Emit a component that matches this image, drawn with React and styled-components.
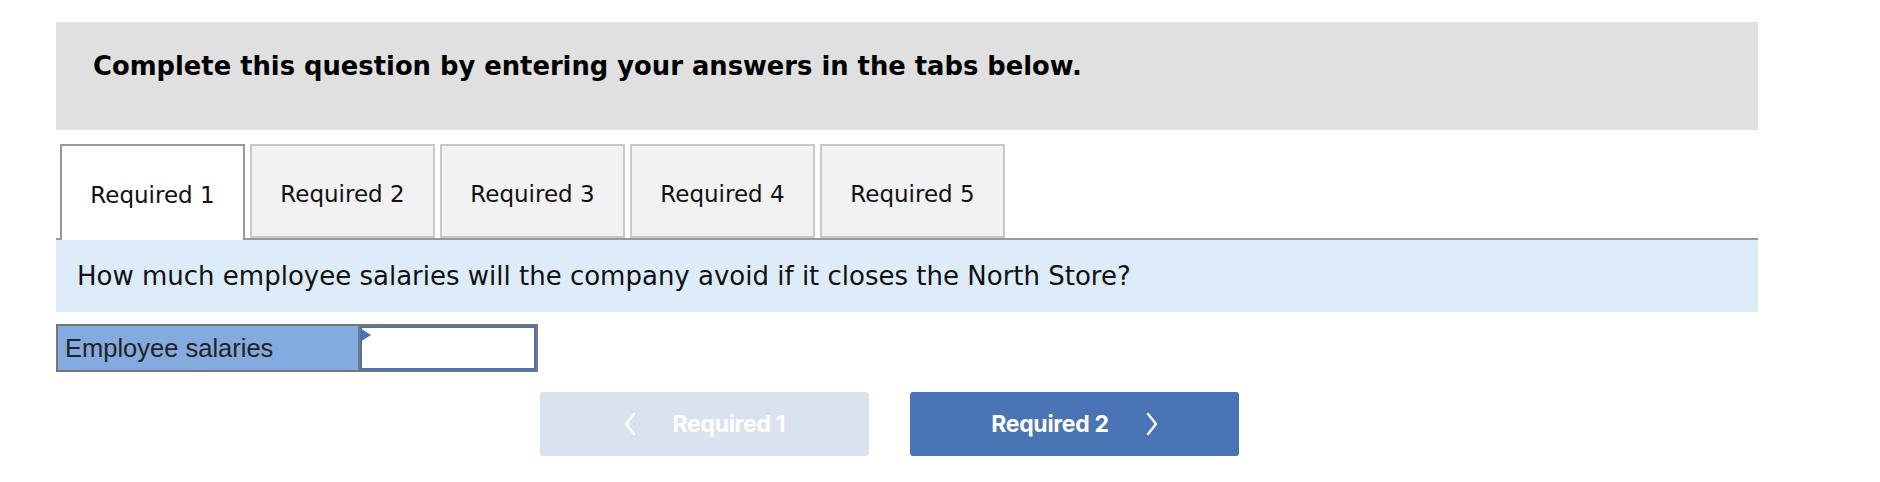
import React from 'react';
import styled, { createGlobalStyle } from 'styled-components';

const GlobalStyle = createGlobalStyle`
  body {
    margin: 0;
    background: #ffffff;
    font-family: "DejaVu Sans", Verdana, sans-serif;
  }
`;

const Page = styled.div`
  width: 1702px;
  padding: 22px 0 0 56px;
`;

const Instructions = styled.div`
  height: 108px;
  padding: 29px 0 0 37px;
  box-sizing: border-box;

  font-weight: 700;
  font-size: 25.8px;
  color: #000000;

  background: #e0e0e0;
`;

const TabBar = styled.div`
  display: flex;
  align-items: flex-end;
  gap: 5px;
  margin-top: 14px;
  padding-left: 4px;

  border-bottom: 2px solid #999999;
`;

const Tab = styled.button`
  display: flex;
  align-items: center;
  justify-content: center;
  box-sizing: border-box;
  width: 185px;
  height: ${(p) => (p.active ? '96px' : '94px')};
  margin-bottom: ${(p) => (p.active ? '-2px' : '0')};
  padding: 6px 0 ${(p) => (p.active ? '2px' : '0')};

  font-family: "DejaVu Sans", Verdana, sans-serif;
  font-size: 23px;
  color: #111111;

  background: ${(p) => (p.active ? '#ffffff' : '#f2f2f2')};
  border: 2px solid ${(p) => (p.active ? '#999999' : '#c8c8c8')};
  border-bottom: ${(p) => (p.active ? 'none' : '2px solid #c8c8c8')};
  cursor: pointer;
`;

const Question = styled.div`
  display: flex;
  align-items: center;
  height: 72px;
  padding-left: 21px;

  font-size: 26px;
  color: #111111;

  background: #deebf8;
`;

const AnswerRow = styled.div`
  display: flex;
  width: 482px;
  height: 48px;
  margin-top: 12px;
  box-sizing: border-box;

  border: 2px solid #777777;
`;

const Label = styled.div`
  display: flex;
  align-items: center;
  width: 302px;
  padding-left: 7px;
  box-sizing: border-box;

  font-family: "Liberation Sans", Arial, sans-serif;
  font-size: 25.5px;
  color: #222222;

  background: #84abdf;
  border-right: 2px solid #777777;
`;

const InputCell = styled.div`
  position: relative;
  flex: 1;
`;

const Marker = styled.div`
  position: absolute;
  top: 2px;
  left: 0;
  width: 0;
  height: 0;

  border-top: 7px solid transparent;
  border-bottom: 7px solid transparent;
  border-left: 11px solid #4a75b5;
`;

const Field = styled.input`
  display: block;
  width: 100%;
  height: 100%;
  box-sizing: border-box;

  font-size: 20px;

  border: 2px solid #4a73b2;
  outline: none;
`;

const Nav = styled.div`
  display: flex;
  gap: 41px;
  margin-top: 20px;
  padding-left: 484px;
`;

const NavButton = styled.button`
  display: flex;
  align-items: center;
  justify-content: center;
  gap: 37px;
  width: 329px;
  height: 64px;

  font-family: Inter, "Noto Sans", sans-serif;
  font-weight: 700;
  font-size: 23px;
  letter-spacing: -0.3px;
  color: #ffffff;

  background: ${(p) => (p.disabled ? '#d9e3ef' : '#4a75b4')};
  border: none;
  border-radius: 3px;
  cursor: ${(p) => (p.disabled ? 'default' : 'pointer')};
`;

const Chevron = ({ dir }) => (
  <svg width="12" height="22" viewBox="0 0 12 22" fill="none">
    <path
      d={dir === 'left' ? 'M10 1 L2 11 L10 21' : 'M2 1 L10 11 L2 21'}
      stroke="#ffffff"
      strokeWidth="2.4"
      strokeLinecap="round"
      strokeLinejoin="round"
    />
  </svg>
);

const tabs = ['Required 1', 'Required 2', 'Required 3', 'Required 4', 'Required 5'];

export default function App() {
  return (
    <>
      <GlobalStyle />
      <Page>
        <Instructions>
          Complete this question by entering your answers in the tabs below.
        </Instructions>

        <TabBar>
          {tabs.map((t, i) => (
            <Tab key={t} active={i === 0}>
              {t}
            </Tab>
          ))}
        </TabBar>

        <Question>
          How much employee salaries will the company avoid if it closes the North Store?
        </Question>

        <AnswerRow>
          <Label>Employee salaries</Label>
          <InputCell>
            <Field type="text" />
            <Marker />
          </InputCell>
        </AnswerRow>

        <Nav>
          <NavButton disabled>
            <Chevron dir="left" />
            Required 1
          </NavButton>
          <NavButton>
            Required 2
            <Chevron dir="right" />
          </NavButton>
        </Nav>
      </Page>
    </>
  );
}
